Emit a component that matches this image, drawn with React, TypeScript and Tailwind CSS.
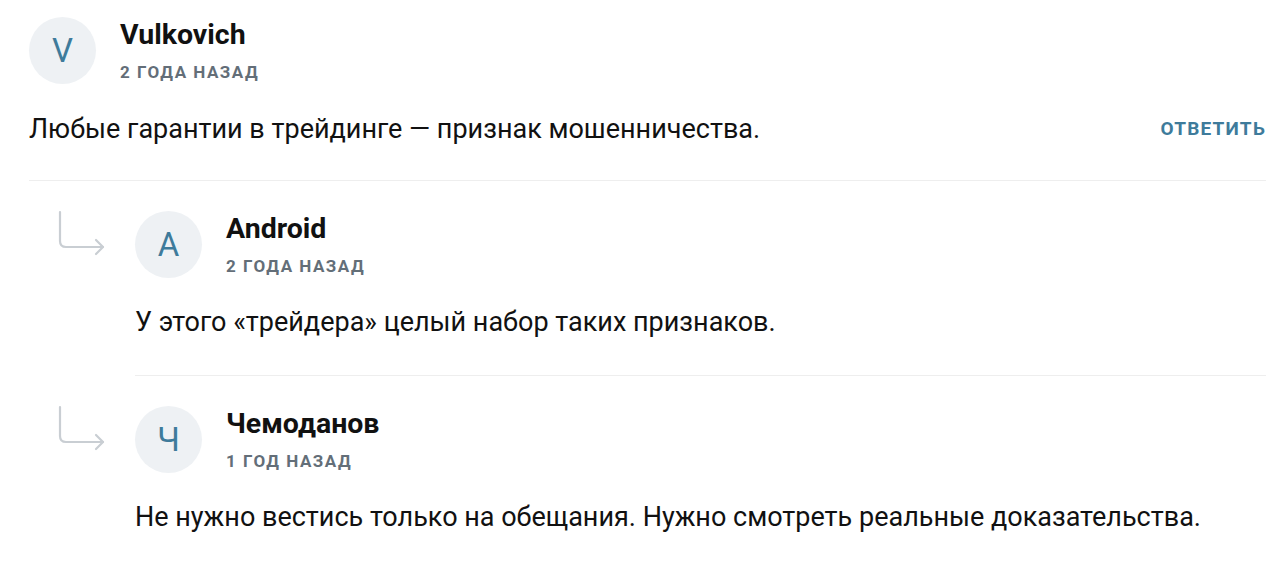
import React from "react";

const font = { fontFamily: "Roboto, 'Noto Sans', sans-serif" };

function Avatar({ letter }: { letter: string }) {
  return (
    <div className="w-[67px] h-[67px] shrink-0 rounded-full bg-[#eef1f4] flex items-center justify-center text-[33px] text-[#3e7b9b]">
      {letter}
    </div>
  );
}

function Header({ name, time, letter }: { name: string; time: string; letter: string }) {
  return (
    <div className="flex items-start gap-[24px]">
      <Avatar letter={letter} />
      <div className="flex flex-col pt-[1px]">
        <div className="text-[28.5px] leading-[34px] font-bold text-[#111111]">{name}</div>
        <div className="mt-[10px] text-[17px] leading-[20px] font-bold tracking-[1.5px] text-[#636e78] uppercase">
          {time}
        </div>
      </div>
    </div>
  );
}

function ReplyArrow() {
  return (
    <svg width="50" height="48" viewBox="0 0 50 48" fill="none" stroke="#c9ced3" strokeWidth="2.2" strokeLinecap="round" strokeLinejoin="round">
      <path d="M3 2 V31 Q3 37 9 37 H46" />
      <path d="M39 30 L46 37 L39 44" />
    </svg>
  );
}

function Reply({ name, time, letter, text, last }: { name: string; time: string; letter: string; text: string; last?: boolean }) {
  return (
    <div className="flex">
      <div className="w-[106px] shrink-0 pt-[29px] pl-[28px]">
        <ReplyArrow />
      </div>
      <div className={"flex-1 pt-[30px] pb-[35px] " + (last ? "" : "border-b border-[#eeeeee]")}>
        <Header name={name} time={time} letter={letter} />
        <div className="mt-[26px] text-[27px] leading-[36px] text-[#111111]">{text}</div>
      </div>
    </div>
  );
}

export default function App() {
  return (
    <div className="bg-white w-[1285px] h-[572px] overflow-hidden pl-[29px] pr-[19px]" style={font}>
      <div className="pt-[17px] pb-[33px] border-b border-[#eeeeee]">
        <Header name="Vulkovich" time="2 года назад" letter="V" />
        <div className="mt-[27px] flex items-center justify-between">
          <div className="text-[27px] leading-[36px] text-[#111111]">
            Любые гарантии в трейдинге — признак мошенничества.
          </div>
          <div className="text-[19px] font-bold tracking-[1.2px] text-[#3e7b9b]">ОТВЕТИТЬ</div>
        </div>
      </div>
      <Reply name="Android" time="2 года назад" letter="A" text="У этого «трейдера» целый набор таких признаков." />
      <Reply
        name="Чемоданов"
        time="1 год назад"
        letter="Ч"
        text="Не нужно вестись только на обещания. Нужно смотреть реальные доказательства."
        last
      />
    </div>
  );
}
